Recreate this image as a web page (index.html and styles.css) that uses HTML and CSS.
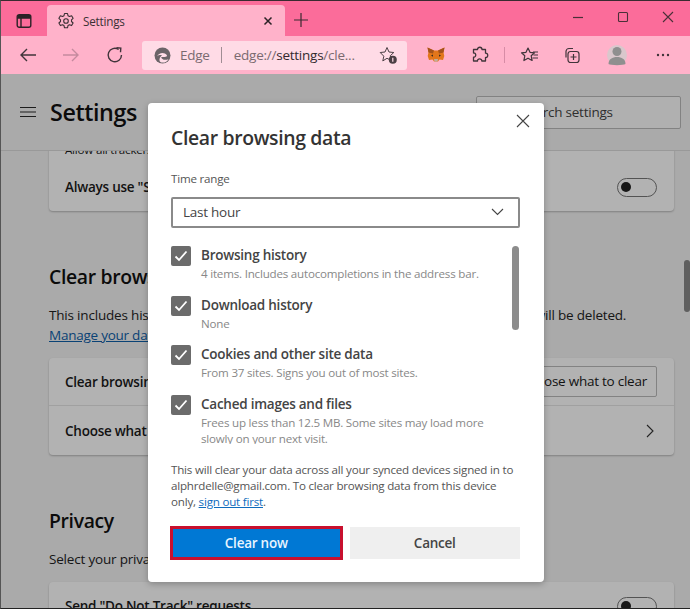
FILE: index.html
```html
<!DOCTYPE html>
<html lang="en">
<head>
<meta charset="utf-8">
<title>Settings</title>
<link rel="stylesheet" href="styles.css">
</head>
<body>
<div class="window">
  <header class="tabstrip">
    <div class="tabs-btn">
      <svg width="16" height="16" viewBox="0 0 16 16"><rect x="1.2" y="1.7" width="13.6" height="12.6" rx="2" fill="none" stroke="#2b2226" stroke-width="1.4"/><path d="M1.2 5H14.8M5 5V14" stroke="#2b2226" stroke-width="1.4"/><rect x="1.5" y="2" width="13" height="3" fill="#2b2226"/></svg>
    </div>
    <div class="tab">
      <svg class="tab-gear" width="18" height="18" viewBox="0 0 18 18" fill="none" stroke="#3a3034" stroke-width="1.1"><path d="M7.5 1.5h3l.5 2.2 1.5.8 2.1-.8 1.5 2.6-1.6 1.5v1.7l1.6 1.5-1.5 2.6-2.1-.8-1.5.8-.5 2.2h-3l-.5-2.2-1.5-.8-2.1.8-1.5-2.6 1.6-1.5V7.8L1.9 6.3l1.5-2.6 2.1.8 1.5-.8z" stroke-linejoin="round"/><circle cx="9" cy="9" r="2.3"/></svg>
      <span class="tab-title">Settings</span>
      <svg class="tab-close" width="10" height="10" viewBox="0 0 10 10"><path d="M1.5 1.5l7 7M8.5 1.5l-7 7" stroke="#2b2226" stroke-width="1.5"/></svg>
    </div>
    <svg class="new-tab" width="16" height="16" viewBox="0 0 16 16"><path d="M8 1v14M1 8h14" stroke="#3a2a30" stroke-width="1.2"/></svg>
    <div class="win-controls">
      <svg width="12" height="12" viewBox="0 0 12 12"><path d="M1 6.5h10" stroke="#4a3038" stroke-width="1.2"/></svg>
      <svg width="12" height="12" viewBox="0 0 12 12"><rect x="1.5" y="1.5" width="9" height="9" rx="1" fill="none" stroke="#4a3038" stroke-width="1.1"/></svg>
      <svg width="12" height="12" viewBox="0 0 12 12"><path d="M1 1l10 10M11 1L1 11" stroke="#4a3038" stroke-width="1.1"/></svg>
    </div>
  </header>

  <nav class="toolbar">
    <svg class="nav-icon" width="18" height="16" viewBox="0 0 18 16" fill="none" stroke="#40343a" stroke-width="1.4"><path d="M17 8H2M8 2L2 8l6 6"/></svg>
    <svg class="nav-icon nav-off" width="18" height="16" viewBox="0 0 18 16" fill="none" stroke="#c58a9e" stroke-width="1.4"><path d="M1 8h15M10 2l6 6-6 6"/></svg>
    <svg class="nav-icon nav-reload" width="18" height="18" viewBox="0 0 18 18" fill="none" stroke="#40343a" stroke-width="1.4"><path d="M15.5 9A6.7 6.7 0 1 1 12.6 3.5"/><path d="M9.5 1.5L13.8 1.8 13.5 6" transform="translate(1 .3)"/></svg>
    <div class="omnibox">
      <svg class="edge-logo" width="17" height="17" viewBox="0 0 17 17"><circle cx="8.5" cy="8.5" r="8" fill="#6b6468"/><path d="M3 9.5c1.5-4 7.5-4.8 9.8-1.5.6 1.3-.4 2-2.4 2H7.2c.3 2.5 3.5 3.700 7.300 2.200-1.500 2.800-4.300 3.800-7 3.200C4 14.500 5.600 9.800 8 8.200 6 7.800 4 8.300 3 9.500z" fill="#ffdde8"/></svg>
      <span class="omni-edge">Edge</span>
      <span class="omni-sep"></span>
      <span class="omni-url">edge://<b>settings</b>/cle...</span>
      <svg class="omni-star" width="19" height="19" viewBox="0 0 19 19" fill="none" stroke="#4a3f44" stroke-width="1"><path d="M8 1.500l2 4.500 4.800.5-3.500 3.200.9 4.700L8 12.300 3.800 14.900l1-4.700L1.200 6.500 6 6z" stroke-linejoin="round"/><circle cx="13.800" cy="13.800" r="4" fill="#4a3f44" stroke="none"/><path d="M13.800 11.800v4" stroke="#ffdde8" stroke-width="1.200"/></svg>
    </div>
    <svg class="fox" width="18" height="16" viewBox="0 0 18 16"><path d="M0.500 0.500L7 3.500h4L17.500 0.500l-1 5 .8 3.500-1.300 4-3.500-.5L11 14.500H7l-1.500-2-3.500.5-1.300-4 .8-3.500z" fill="#e2761b"/><path d="M6 7.500l-2 1 2 1.200zM12 7.500l2 1-2 1.200z" fill="#3a2a20"/><path d="M7 12h4l-.5 2.500h-3z" fill="#c0ad9e"/><path d="M0.500 0.500L7 3.500 6 6.500 1.500 5.500zM17.500 0.500L11 3.500l1 3 4.500-1z" fill="#a5521a"/></svg>
    <svg class="puzzle" width="18" height="18" viewBox="0 0 18 18" fill="none" stroke="#40343a" stroke-width="1.300"><path d="M6.500 3.500c0-3 4.500-3 4.500 0h3.500v3.700c3-.5 3 4.800 0 4.300v3.500h-3.700c.5-2.800-4.800-2.800-4.300 0H2.500v-3.800c3 .5 3-4.700 0-4.200V3.500z" stroke-linejoin="round"/></svg>
    <span class="tool-sep"></span>
    <svg class="favs" width="20" height="18" viewBox="0 0 20 18" fill="none" stroke="#40343a" stroke-width="1.200"><path d="M8 2l2 4.300 4.500.5-3.300 3 .9 4.700L8 12.200 3.900 14.500l.9-4.700-3.300-3L6 6.300z" stroke-linejoin="round"/><path d="M13 6h5M13.500 9H18M12.500 12H18"/></svg>
    <svg class="collections" width="20" height="18" viewBox="0 0 20 18" fill="none" stroke="#40343a" stroke-width="1.200"><path d="M4 11.500V5.500a3 3 0 0 1 3-3h4"/><rect x="6" y="5.500" width="11" height="11" rx="2.500"/><path d="M11.500 8v6M8.500 11h6"/></svg>
    <svg class="profile" width="20" height="22" viewBox="0 0 20 22"><circle cx="10" cy="11" r="10" fill="#d9c7cc"/><circle cx="10" cy="7.500" r="4.500" fill="#8f8f8f"/><path d="M1.500 20c0-5 4-7 8.500-7s8.500 2 8.500 7c-2 1.500-15 1.500-17 0z" fill="#8f8f8f"/></svg>
    <svg class="more" width="14" height="4" viewBox="0 0 14 4"><circle cx="2" cy="2" r="1.200" fill="#40343a"/><circle cx="7" cy="2" r="1.200" fill="#40343a"/><circle cx="12" cy="2" r="1.200" fill="#40343a"/></svg>
  </nav>

  <main class="settings">
    <div class="settings-head">
      <svg width="16" height="12" viewBox="0 0 16 12"><path d="M0 1.500h16M0 6h16M0 10.500h16" stroke="#2a2a2a" stroke-width="1.200"/></svg>
      <h1>Settings</h1>
      <div class="search">Search settings</div>
    </div>
    <div class="settings-body">
      <section class="card card-top">
        <div class="clipped">Allow all trackers on sites</div>
        <div class="row row-top"><span>Always use "Strict" tracking prevention when browsing InPrivate</span><span class="toggle"></span></div>
      </section>
      <h2 class="heading-clear">Clear browsing data</h2>
      <p class="desc">This includes history, passwords, cookies, and more. Only data from this profile will be deleted.</p>
      <a class="manage">Manage your data</a>
      <section class="card card-clear">
        <div class="row row-divided"><span>Clear browsing data now</span><span class="choose">Choose what to clear</span></div>
        <div class="row row-link"><span>Choose what to clear every time you close the browser</span>
          <svg width="8" height="14" viewBox="0 0 8 14"><path d="M1 1l6 6-6 6" fill="none" stroke="#333" stroke-width="1.100"/></svg></div>
      </section>
      <h2 class="heading-privacy">Privacy</h2>
      <p class="desc desc-privacy">Select your privacy settings for Microsoft Edge.</p>
      <section class="card card-last">
        <div class="row"><span>Send "Do Not Track" requests</span><span class="toggle"></span></div>
      </section>
    </div>
    <div class="scrollbar-page"></div>
    <div class="scrim"></div>
    <div class="dialog">
      <svg class="dialog-close" width="14" height="14" viewBox="0 0 14 14"><path d="M1 1l12 12M13 1L1 13" stroke="#444" stroke-width="1.100"/></svg>
      <h2 class="dialog-title">Clear browsing data</h2>
      <div class="range-label">Time range</div>
      <div class="select"><span>Last hour</span>
        <svg width="13" height="8" viewBox="0 0 13 8"><path d="M1 1l5.500 5.500L12 1" fill="none" stroke="#444" stroke-width="1.100"/></svg></div>
      <div class="options">
        <div class="options-list">
          <div class="option"><span class="check"><svg width="14" height="12" viewBox="0 0 14 12"><path d="M1.500 6.500l3.500 3.500 7.500-8.500" fill="none" stroke="#fff" stroke-width="1.800"/></svg></span><div><div class="opt-title">Browsing history</div><div class="opt-sub">4 items. Includes autocompletions in the address bar.</div></div></div>
          <div class="option"><span class="check"><svg width="14" height="12" viewBox="0 0 14 12"><path d="M1.500 6.500l3.500 3.500 7.500-8.500" fill="none" stroke="#fff" stroke-width="1.800"/></svg></span><div><div class="opt-title">Download history</div><div class="opt-sub">None</div></div></div>
          <div class="option"><span class="check"><svg width="14" height="12" viewBox="0 0 14 12"><path d="M1.500 6.500l3.500 3.500 7.500-8.500" fill="none" stroke="#fff" stroke-width="1.800"/></svg></span><div><div class="opt-title">Cookies and other site data</div><div class="opt-sub">From 37 sites. Signs you out of most sites.</div></div></div>
          <div class="option"><span class="check"><svg width="14" height="12" viewBox="0 0 14 12"><path d="M1.500 6.500l3.500 3.500 7.500-8.500" fill="none" stroke="#fff" stroke-width="1.800"/></svg></span><div><div class="opt-title">Cached images and files</div><div class="opt-sub">Frees up less than 12.5 MB. Some sites may load more slowly on your next visit.</div></div></div>
        </div>
        <div class="options-scroll"></div>
      </div>
      <p class="sync">This will clear your data across all your synced devices signed in to alphrdelle@gmail.com. To clear browsing data from this device only, <a class="sync-link">sign out first</a>.</p>
      <div class="actions">
        <button class="btn btn-primary">Clear now</button>
        <button class="btn btn-cancel">Cancel</button>
      </div>
    </div>
  </main>
</div>
</body>
</html>
```
FILE: styles.css
```css
* { box-sizing: border-box; letter-spacing: -.018em; }
html, body { margin: 0; padding: 0; height: 100%; overflow: hidden; }
body { font-family: "Open Sans", "Noto Sans", sans-serif; color: #222; }
h1, h2, p { margin: 0; }
.window { width: 690px; height: 609px; display: flex; flex-direction: column; border-top: 1px solid #3a2a30; border-left: 1px solid #555; border-bottom: 1px solid #222; overflow: hidden; }

.tabstrip { height: 35px; flex: none; background: #fb6c9a; display: flex; align-items: flex-end; position: relative; }
.tabs-btn { width: 46px; height: 35px; display: flex; align-items: center; justify-content: center; padding-top: 5px; }
.tab { width: 238px; height: 31px; background: #ffb2ca; border-radius: 4px 4px 0 0; display: flex; align-items: center; padding: 0 0 0 10px; }
.tab-gear { flex: none; }
.tab-title { font-size: 11.7px; margin-left: 8px; flex: 1; color: #3a3034; }
.tab-close { margin-right: 12px; }
.new-tab { margin: 0 0 8px 8px; }
.win-controls { margin-left: auto; height: 35px; display: flex; align-items: center; gap: 33px; padding: 0 16px 3px 0; }

.toolbar { height: 38px; flex: none; background: #ffb2ca; display: flex; align-items: center; position: relative; }
.nav-icon { margin-left: 18px; flex: none; }
.nav-off { margin-left: 25px; }
.nav-reload { margin-left: 26px; }
.omnibox { width: 265px; height: 29px; margin-left: 18px; background: #ffdbe6; border-radius: 3px; display: flex; align-items: center; padding: 0 0 0 12px; font-size: 13.5px; color: #7a6a70; }
.edge-logo { flex: none; }
.omni-edge { margin-left: 9px; }
.omni-sep { width: 1px; height: 16px; background: #a08d94; margin: 0 12px 0 11px; }
.omni-url { white-space: nowrap; }
.omni-url b { font-weight: 400; color: #332a2e; }
.omni-star { margin-left: auto; margin-right: 9px; }
.fox { margin-left: 20px; flex: none; }
.puzzle { margin-left: 26px; flex: none; }
.tool-sep { width: 1px; height: 16px; background: #d78ca6; margin-left: 15px; }
.favs { margin-left: 15px; flex: none; }
.collections { margin-left: 22px; flex: none; }
.profile { margin-left: 25px; flex: none; }
.more { margin-left: 29px; flex: none; }

.settings { flex: 1; position: relative; background: #f4f4f4; overflow: hidden; }
.settings-head { height: 77px; display: flex; align-items: center; border-bottom: 1px solid #dcdcdc; padding: 0 9px 0 19px; position: relative; z-index: 1; background: #f4f4f4; }
.settings-head h1 { font-size: 23.3px; font-weight: 600; margin-left: 14px; color: #111; }
.search { margin-left: auto; width: 205px; height: 33px; border: 1px solid #bbb; background: #fdfdfd; border-radius: 2px; font-size: 13.5px; padding: 6px 0 0 44px; color: #444; }
.settings-body { padding: 0 16px 0 48px; }
.card { background: #fff; border-radius: 4px; box-shadow: 0 1px 2px rgba(0,0,0,.25); font-size: 13.5px; font-weight: 600; color: #1a1a1a; }
.card-top { margin-top: -12px; height: 72px; overflow: hidden; }
.clipped { height: 22px; padding: 3px 16px 0; font-size: 11.6px; font-weight: 400; line-height: 16px; }
.row { display: flex; align-items: center; justify-content: space-between; height: 48px; padding: 0 17px 0 16px; white-space: nowrap; }
.row-top { height: 50px; padding-top: 2px; }
.row-divided { border-bottom: 1px solid #e6e6e6; }
.row-link { height: 49px; padding-right: 20px; }
.toggle { width: 40px; height: 19px; border: 1.500px solid #777; border-radius: 10px; position: relative; flex: none; }
.toggle::after { content: ""; position: absolute; left: 3px; top: 3px; width: 10px; height: 10px; border-radius: 50%; background: #222; }
.choose { border: 1px solid #bbb; border-radius: 2px; height: 31px; line-height: 29px; padding: 0 9px; font-weight: 400; background: #fff; }
.heading-clear { font-size: 19.4px; font-weight: 600; margin-top: 52px; color: #111; }
.desc { font-size: 13.5px; margin-top: 15px; line-height: 20px; white-space: nowrap; color: #222; letter-spacing: -.014em; }
.manage { display: block; font-size: 13.5px; line-height: 20px; color: #0f5fa8; text-decoration: underline; }
.card-clear { margin-top: 13px; }
.heading-privacy { font-size: 19.4px; font-weight: 600; margin-top: 52px; color: #111; }
.desc-privacy { margin-top: 15px; }
.card-last { margin-top: 13px; }
.scrollbar-page { position: absolute; right: 0; top: 186px; width: 6px; height: 52px; background: #888; border-radius: 3px; }
.scrim { position: absolute; inset: 0; z-index: 2; background: rgba(0,0,0,.3); }

.dialog { position: absolute; z-index: 3; left: 147px; top: 29px; width: 396px; height: 479px; background: #fff; border-radius: 4px; padding: 21px 24px 0 23px; box-shadow: 0 2px 6px rgba(0,0,0,.25); }
.dialog-close { position: absolute; right: 14px; top: 11px; }
.dialog-title { font-size: 19.4px; font-weight: 600; line-height: 27px; color: #333; }
.range-label { font-size: 11.6px; line-height: 16px; margin-top: 20px; color: #555; }
.select { height: 31px; margin-top: 10px; border: 2px solid #8a8a8a; border-radius: 2px; display: flex; align-items: center; justify-content: space-between; padding: 0 14px 2px 10px; font-size: 13.5px; color: #444; }
.options { height: 198px; margin-top: 18px; position: relative; overflow: hidden; }
.option { display: flex; gap: 10px; margin-bottom: 9px; height: 40.500px; }
.check { width: 20px; height: 20px; background: #6b6b6b; border-radius: 2px; display: flex; align-items: center; justify-content: center; flex: none; }
.opt-title { font-size: 13.5px; font-weight: 600; line-height: 20px; color: #444; margin-top: -1px; }
.opt-sub { font-size: 11.6px; line-height: 16px; color: #888; width: 300px; margin-top: 1px; }
.options-scroll { position: absolute; right: 1px; top: 0; width: 7px; height: 84px; border-radius: 4px; background: #8c8c8c; }
.sync { font-size: 11.6px; line-height: 16px; margin-top: 18px; color: #555; }
.sync-link { color: #0f6cbd; text-decoration: underline; }
.actions { display: flex; gap: 8px; margin-top: 17px; }
.btn { width: 171px; height: 32px; font: 600 13.5px "Open Sans", "Noto Sans", sans-serif; border: 0; border-radius: 0; padding: 0; }
.btn-primary { background: #0078d4; color: #e8f4ff; outline: 3px solid #c8102e; outline-offset: -2px; }
.btn-cancel { background: #efefef; color: #444; }
```
